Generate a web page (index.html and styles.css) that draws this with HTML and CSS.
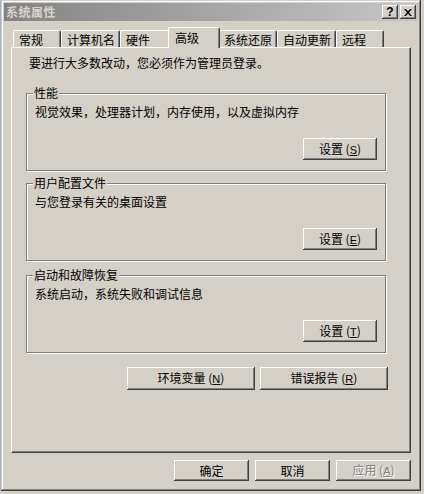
FILE: index.html
```html
<!DOCTYPE html>
<html lang="zh-CN">

<head>
    <meta charset="UTF-8">
    <meta name="viewport" content="width=device-width, initial-scale=1.0">
    <title>系统属性</title>
    <link rel="stylesheet" href="styles.css">
</head>

<body>
    <div class="window">
        <div class="titlebar">
            <span class="title">系统属性</span>
            <div class="title-buttons">
                <button class="title-btn help">?</button>
                <button class="title-btn close">
                    <svg width="8" height="7" viewBox="0 0 8 7">
                        <path d="M0 0h2l2 2.2 2-2.2h2l-3 3.5 3 3.5h-2l-2-2.2-2 2.2h-2l3-3.5z" fill="#000" />
                    </svg>
                </button>
            </div>
        </div>

        <div class="tabs">
            <div class="tab">常规</div>
            <div class="tab">计算机名</div>
            <div class="tab wide">硬件</div>
            <div class="tab active">高级</div>
            <div class="tab">系统还原</div>
            <div class="tab">自动更新</div>
            <div class="tab">远程</div>
        </div>

        <div class="panel">
            <p class="intro">要进行大多数改动，您必须作为管理员登录。</p>

            <fieldset class="group">
                <legend>性能</legend>
                <p class="desc">视觉效果，处理器计划，内存使用，以及虚拟内存</p>
                <div class="group-actions">
                    <button class="btn">设置 (<u>S</u>)</button>
                </div>
            </fieldset>

            <fieldset class="group profile">
                <legend>用户配置文件</legend>
                <p class="desc">与您登录有关的桌面设置</p>
                <div class="group-actions">
                    <button class="btn">设置 (<u>E</u>)</button>
                </div>
            </fieldset>

            <fieldset class="group recovery">
                <legend>启动和故障恢复</legend>
                <p class="desc">系统启动，系统失败和调试信息</p>
                <div class="group-actions">
                    <button class="btn">设置 (<u>T</u>)</button>
                </div>
            </fieldset>

            <div class="env-row">
                <button class="btn long">环境变量 (<u>N</u>)</button>
                <button class="btn long">错误报告 (<u>R</u>)</button>
            </div>
        </div>

        <div class="footer">
            <button class="btn dialog">确定</button>
            <button class="btn dialog">取消</button>
            <button class="btn dialog disabled">应用 (<u>A</u>)</button>
        </div>
    </div>
</body>

</html>
```

FILE: styles.css
```css
* {
    box-sizing: border-box;
}

body {
    margin: 0;
    background: #d4d0c8;
    font: 12px/16px "Noto Sans CJK SC", "Noto Sans", sans-serif;
    color: #000;
}

p {
    margin: 0;
}

/* 窗口外框 */
.window {
    width: 421px;
    height: 491px;
    padding: 3px;
    background: #d4d0c8;
    border-left: 1px solid #9fb0c8;
    box-shadow: inset -1px -1px #404040, inset 1px 1px #d4d0c8, inset -2px -2px #808080, inset 2px 2px #fff;
}

.titlebar {
    height: 18px;
    display: flex;
    align-items: center;
    justify-content: space-between;
    padding: 0 2px 0 2px;
    background: linear-gradient(to right, #848484, #c6c6c6);
}

.title {
    color: #d8d4cc;
    font-weight: bold;
    letter-spacing: 0.5px;
}

.title-buttons {
    display: flex;
    gap: 2px;
}

.title-btn {
    width: 16px;
    height: 14px;
    padding: 0;
    border: none;
    background: #d4d0c8;
    display: flex;
    align-items: center;
    justify-content: center;
    font: bold 12px/12px "Liberation Sans", sans-serif;
    box-shadow: inset -1px -1px #404040, inset 1px 1px #fff, inset -2px -2px #808080;
}

/* 选项卡 */
.tabs {
    display: flex;
    align-items: flex-end;
    height: 20px;
    margin: 6px 7px 0;
    padding-left: 2px;
}

.tab {
    height: 17px;
    min-width: 48px;
    padding: 2px 4px 0 5px;
    line-height: 14px;
    white-space: nowrap;
    border-top: 1px solid #fff;
    border-left: 1px solid #fff;
    border-right: 1px solid #404040;
    border-radius: 2px 2px 0 0;
    box-shadow: inset -1px 0 #808080;
}

.tab.wide {
    min-width: 50px;
}

.tab.active {
    position: relative;
    z-index: 1;
    height: 21px;
    min-width: 52px;
    margin: 0 -2px -1px;
    padding-top: 3px;
    padding-left: 6px;
    background: #d4d0c8;
}

.panel {
    height: 406px;
    margin: 0 7px;
    padding: 7px 24px 0 14px;
    border: 1px solid;
    border-color: #fff #404040 #404040 #fff;
    box-shadow: inset -1px -1px #808080;
}

.intro {
    margin-left: 3px;
}

/* 分组框 */
.group {
    margin: 14px 0 0;
    padding: 0 8px 10px;
    min-width: 0;
    border: 1px solid #808080;
    box-shadow: 1px 1px #fff, inset 1px 1px #fff;
}

.group legend {
    margin-left: -2px;
    padding: 0 1px;
    background: #d4d0c8;
}

.group.profile {
    margin-top: 4px;
}

.group.recovery {
    margin-top: 6px;
}

.desc {
    margin-top: 3px;
}

.group-actions {
    display: flex;
    justify-content: flex-end;
    margin-top: 18px;
}

/* 按钮 */
.btn {
    width: 74px;
    height: 22px;
    padding: 0;
    border: none;
    background: #d4d0c8;
    font: inherit;
    color: #000;
    box-shadow: inset -1px -1px #404040, inset 1px 1px #fff, inset -2px -2px #808080;
}

.btn u {
    font-family: "Liberation Sans", sans-serif;
    font-size: 11px;
}

.env-row {
    display: flex;
    justify-content: flex-end;
    gap: 5px;
    margin: 14px -2px 0 0;
}

.btn.long {
    width: 128px;
    height: 23px;
}

.footer {
    display: flex;
    justify-content: flex-end;
    gap: 6px;
    margin: 7px 7px 0 0;
}

.btn.dialog {
    width: 75px;
    height: 21px;
}

.btn.disabled {
    color: #808080;
    text-shadow: 1px 1px #fff;
}
```
